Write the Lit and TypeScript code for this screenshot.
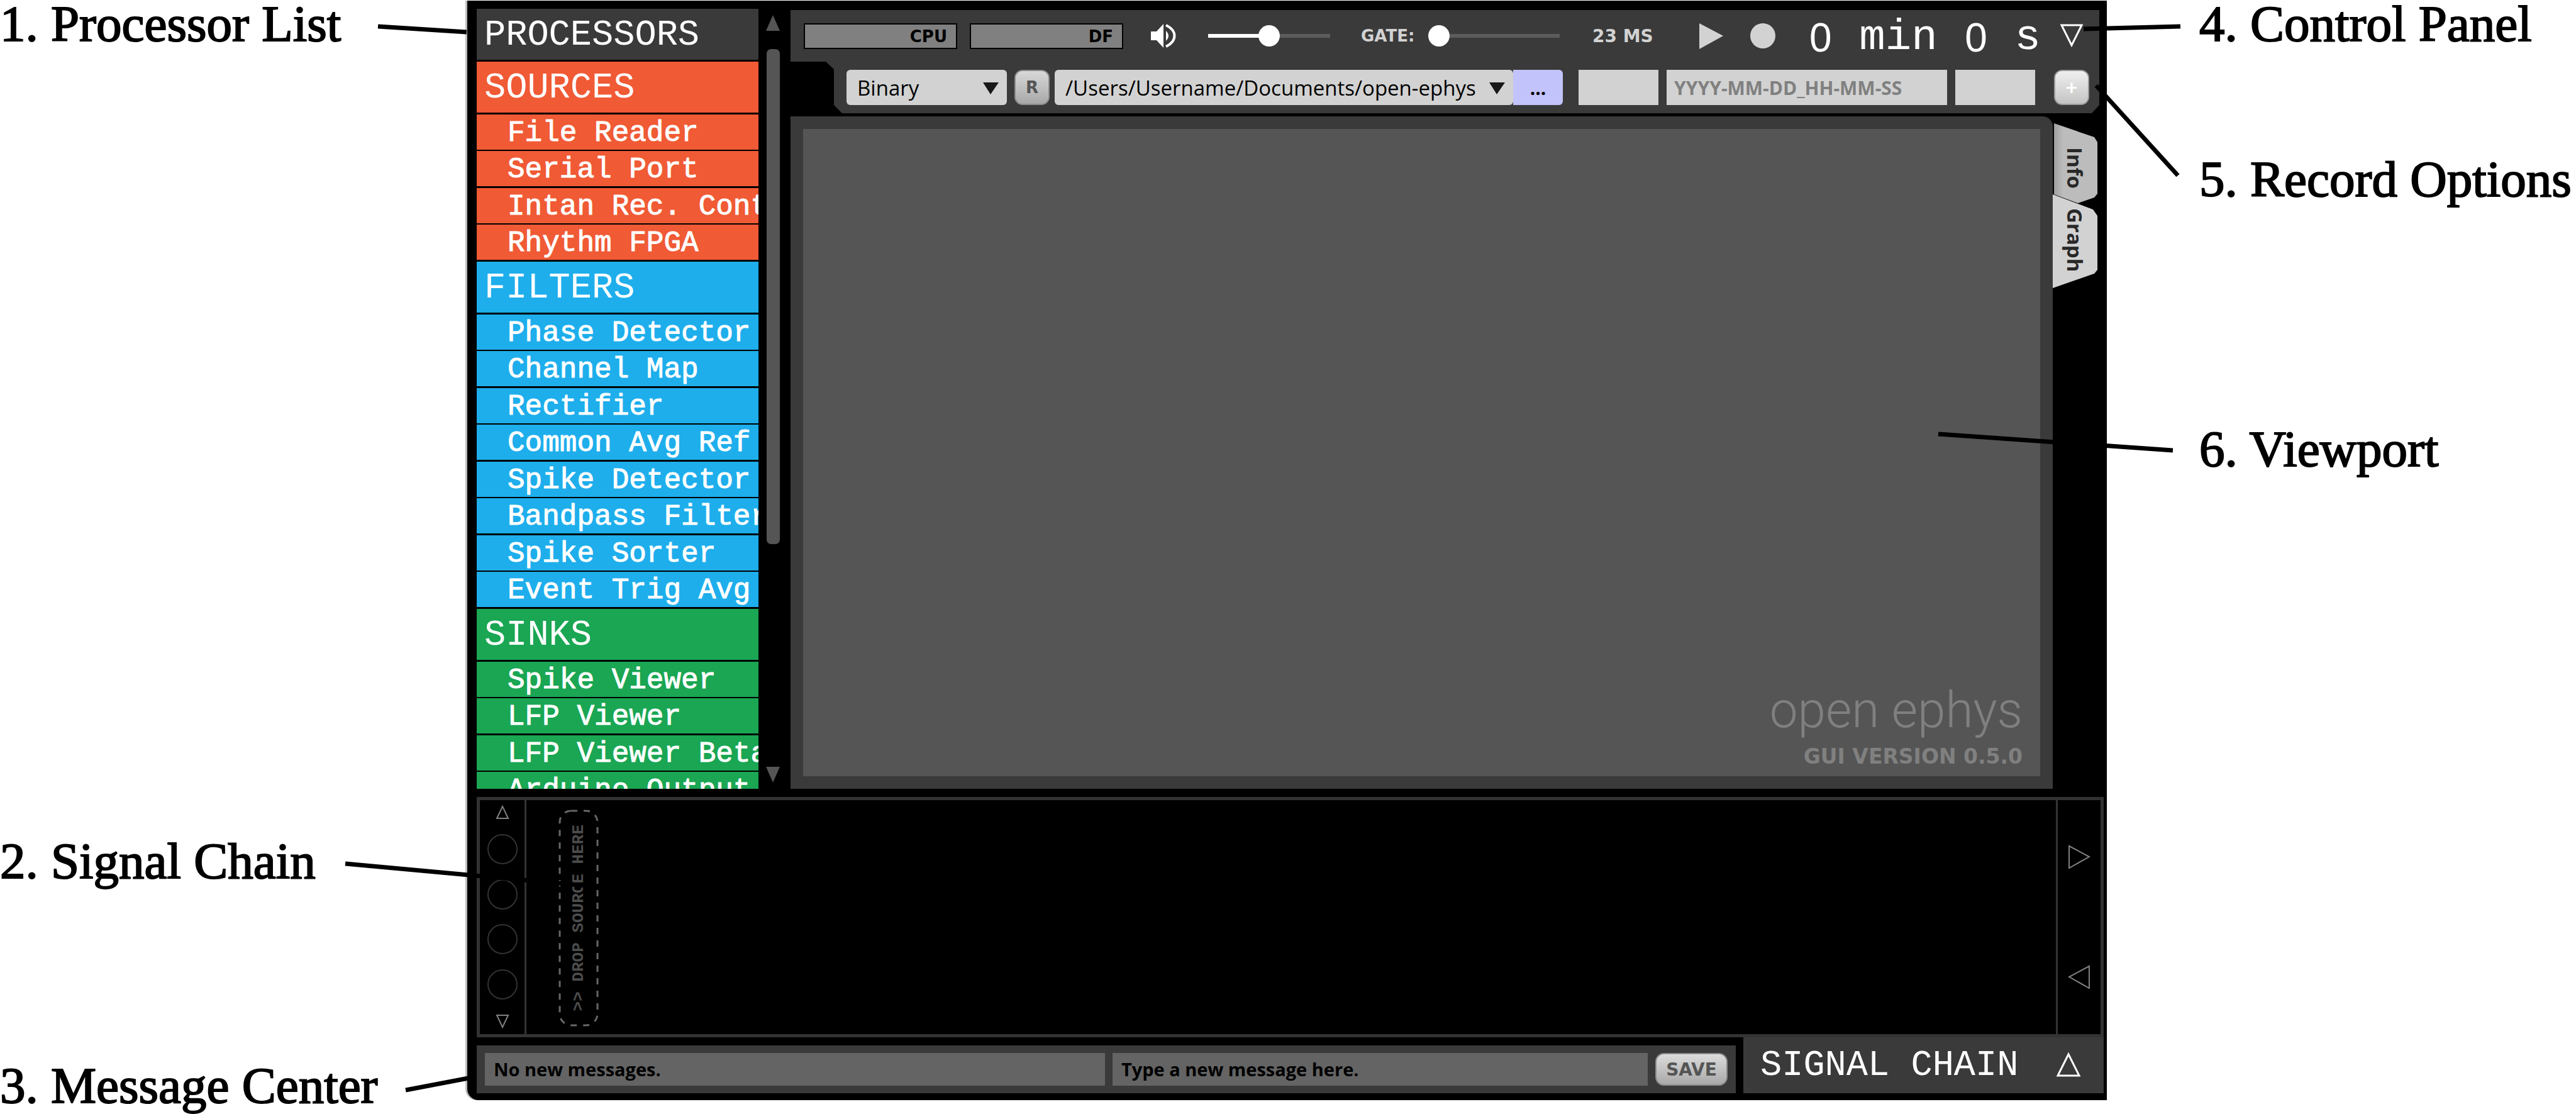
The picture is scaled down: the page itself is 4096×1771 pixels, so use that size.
import { LitElement, html, svg, css } from "lit";
import { customElement, state } from "lit/decorators.js";

interface Category {
  name: string;
  tone: string;
  items: string[];
}

const CATEGORIES: Category[] = [
  {
    name: "SOURCES",
    tone: "sources",
    items: ["File Reader", "Serial Port", "Intan Rec. Controller", "Rhythm FPGA"],
  },
  {
    name: "FILTERS",
    tone: "filters",
    items: [
      "Phase Detector",
      "Channel Map",
      "Rectifier",
      "Common Avg Ref",
      "Spike Detector",
      "Bandpass Filter",
      "Spike Sorter",
      "Event Trig Avg",
    ],
  },
  {
    name: "SINKS",
    tone: "sinks",
    items: ["Spike Viewer", "LFP Viewer", "LFP Viewer Beta", "Arduino Output"],
  },
];

@customElement("processor-list")
export class ProcessorList extends LitElement {
  static styles = css`
    :host {
      display: flex;
      min-height: 0;
      font-family: "Liberation Mono", monospace;
      color: #fff;
    }
    .list {
      width: 448px;
      overflow: hidden;
    }
    .head {
      margin: 0;
      height: 81px;
      padding-left: 12px;
      border-bottom: 3px solid #000;
      font-size: 57px;
      font-weight: 400;
      line-height: 84px;
      white-space: nowrap;
    }
    .items {
      margin: 0;
      padding: 0;
      list-style: none;
    }
    .item {
      height: 56px;
      padding-left: 49px;
      border-bottom: 2px solid #000;
      font-size: 46px;
      line-height: 60px;
      white-space: nowrap;
      overflow: hidden;
      -webkit-text-stroke: 1px #fff;
    }
    .item:nth-child(even) {
      border-bottom-width: 3px;
    }
    .title {
      background: #3a3a3a;
    }
    .sources .head,
    .sources .item {
      background: #f05a35;
    }
    .filters .head,
    .filters .item {
      background: #1eaeec;
    }
    .sinks .head,
    .sinks .item {
      background: #1aa653;
    }
    .scroll {
      width: 22px;
      margin: 0 17px 0 12px;
      padding: 10px 0;
      display: flex;
      flex-direction: column;
      align-items: center;
    }
    .arrow {
      display: block;
      fill: #555;
    }
    .track {
      flex: 1;
      width: 21px;
      padding-top: 29px;
    }
    .thumb {
      height: 69%;
      border-radius: 7px;
      background: #555;
    }
  `;

  render() {
    return html`
      <div class="list">
        <h1 class="head title">PROCESSORS</h1>
        ${CATEGORIES.map(
          (c) => html`
            <section class=${c.tone}>
              <h2 class="head">${c.name}</h2>
              <ul class="items">
                ${c.items.map((i) => html`<li class="item" draggable="true">${i}</li>`)}
              </ul>
            </section>
          `
        )}
      </div>
      <div class="scroll">
        <svg class="arrow" width="22" height="25"><path d="M11 0L22 25H0z" /></svg>
        <div class="track"><div class="thumb"></div></div>
        <svg class="arrow" width="22" height="25"><path d="M0 0H22L11 25z" /></svg>
      </div>
    `;
  }
}

/** Transport, audio and recording controls above the viewport. */
@customElement("control-panel")
export class ControlPanel extends LitElement {
  static styles = css`
    * {
      box-sizing: border-box;
    }
    :host {
      display: block;
    }
    button,
    select,
    input {
      margin: 0;
      padding: 0;
      border: 0;
      background: none;
      font: inherit;
      color: inherit;
    }
    .transport {
      display: flex;
      align-items: center;
      height: 82px;
      padding: 0 25px 0 21px;
      background: #3a3a3a;
      font: 700 26px "DejaVu Sans", sans-serif;
      color: #d2d2d2;
    }
    .meter {
      width: 244px;
      height: 41px;
      margin-right: 20px;
      padding-right: 14px;
      border: 2px solid #000;
      background: #808080;
      color: #000;
      line-height: 39px;
      text-align: right;
    }
    .speaker {
      margin: 0 50px 0 24px;
    }
    .slider {
      appearance: none;
      height: 34px;
    }
    .slider::-webkit-slider-runnable-track {
      height: 6px;
      background: #5c5c5c;
    }
    .slider::-webkit-slider-thumb {
      appearance: none;
      width: 34px;
      height: 34px;
      margin-top: -14px;
      border-radius: 50%;
      background: #fff;
    }
    .volume {
      width: 194px;
    }
    .volume::-webkit-slider-runnable-track {
      background: linear-gradient(90deg, #fff 50%, #5c5c5c 50%);
    }
    .gate {
      width: 209px;
    }
    .gate-label {
      width: 107px;
      margin-left: 49px;
    }
    .latency {
      margin-left: 52px;
      font-size: 28px;
    }
    .run {
      display: flex;
      align-items: center;
      margin-left: auto;
    }
    .icon {
      display: block;
      fill: #d2d2d2;
    }
    .record-dot {
      margin-left: 42px;
    }
    .clock {
      display: flex;
      gap: 41px;
      margin-left: 50px;
      padding-top: 6px;
      font: 400 69px/76px "Liberation Mono", monospace;
      color: #fff;
    }
    .digit {
      width: 41px;
      font-family: "Liberation Sans", sans-serif;
      font-size: 64px;
      text-align: center;
    }
    .toggle {
      margin-left: 30px;
    }
    .options {
      display: flex;
      height: 82px;
      margin-left: 56px;
      padding: 13px 16px 13px 33px;
      background: #3a3a3a;
      clip-path: polygon(
        0 0,
        100% 0,
        100% 69px,
        calc(100% - 12px) 100%,
        26px 100%,
        13px 69px,
        13px 12px
      );
      font: 500 33px "Open Sans", sans-serif;
      color: #000;
    }
    .pick {
      position: relative;
      display: flex;
    }
    .pick .select {
      appearance: none;
      width: 100%;
      padding-left: 17px;
      border-radius: 6px;
      background: #d2d2d2;
    }
    .pick .caret {
      position: absolute;
      right: 13px;
      top: 20px;
      fill: #181818;
      pointer-events: none;
    }
    .format {
      width: 255px;
    }
    .path {
      flex: 1;
    }
    .key {
      width: 56px;
      border: 2px solid #8c8c8c;
      border-radius: 13px;
      background: linear-gradient(#d8d8d8, #a8a8a8);
      color: #555;
      font: 700 26px "DejaVu Sans", sans-serif;
      text-align: center;
    }
    .rename {
      margin: 0 8px 0 12px;
    }
    .browse {
      width: 79px;
      border-radius: 0 6px 6px 0;
      background: #c3c3fb;
      font-size: 30px;
      font-weight: 700;
    }
    .field {
      width: 127px;
      background: #d2d2d2;
      color: #808080;
      font-size: 30px;
      font-weight: 700;
    }
    .prefix {
      margin-left: 25px;
    }
    .date {
      width: 446px;
      margin: 0 13px;
      padding-left: 12px;
    }
    .date::placeholder {
      color: #808080;
      opacity: 1;
    }
    .add {
      margin-left: 30px;
      border-color: #9a9a9a;
      background: linear-gradient(#efefef, #c4c4c4);
      color: #fff;
    }
  `;

  render() {
    const caret = svg`<path d="M0 0H25L12 19z" />`;
    return html`
      <div class="transport">
        <div class="meter">CPU</div>
        <div class="meter">DF</div>
        <svg class="speaker" width="41" height="40" viewBox="0 0 41 40">
          <path fill="#fff" d="M0 13H9L20 1V39L9 27H0z" />
          <path fill="#fff" d="M24 12Q28 16 28 20T24 28z" />
          <path
            fill="none"
            stroke="#fff"
            stroke-width="4"
            d="M24 3C42 12 42 28 24 37"
          />
        </svg>
        <input class="slider volume" type="range" value="50" aria-label="Volume" />
        <label class="gate-label" for="gate">GATE:</label>
        <input class="slider gate" id="gate" type="range" value="0" />
        <span class="latency">23 MS</span>
        <div class="run">
          <button aria-label="Play">
            <svg class="icon" width="38" height="41"><path d="M0 0L38 20L0 41z" /></svg>
          </button>
          <button class="record-dot" aria-label="Record">
            <svg class="icon" width="42" height="41"><circle cx="21" cy="20" r="20" /></svg>
          </button>
          <div class="clock">
            <span class="digit">0</span><span>min</span><span class="digit">0</span
            ><span>s</span>
          </div>
          <button class="toggle" aria-label="Hide record options">
            <svg class="icon" width="38" height="40">
              <path d="M3 3H35L19 35z" fill="none" stroke="#fff" stroke-width="3" />
            </svg>
          </button>
        </div>
      </div>
      <div class="options">
        <div class="pick format">
          <select class="select" aria-label="Record format">
            <option>Binary</option>
          </select>
          <svg class="caret" width="25" height="19">${caret}</svg>
        </div>
        <button class="key rename">R</button>
        <div class="pick path">
          <select class="select" aria-label="Data directory">
            <option>/Users/Username/Documents/open-ephys</option>
          </select>
          <svg class="caret" width="25" height="19">${caret}</svg>
        </div>
        <button class="browse">...</button>
        <input class="field prefix" aria-label="Prefix" />
        <input class="field date" aria-label="Base name" placeholder="YYYY-MM-DD_HH-MM-SS" />
        <input class="field" aria-label="Suffix" />
        <button class="key add">+</button>
      </div>
    `;
  }
}

/** Canvas area with its vertical tabs. */
@customElement("data-viewport")
export class DataViewport extends LitElement {
  static styles = css`
    :host {
      display: flex;
      min-height: 0;
    }
    .frame {
      flex: 1;
      display: flex;
      padding: 20px;
      border-radius: 0 16px 0 0;
      background: #3a3a3a;
    }
    .canvas {
      flex: 1;
      display: flex;
      flex-direction: column;
      justify-content: flex-end;
      align-items: flex-end;
      gap: 6px;
      padding: 0 28px 12px;
      background: #555;
      color: #808080;
    }
    .brand {
      font: 300 80px/98px "Roboto", sans-serif;
    }
    .version {
      font: 700 33px/38px "DejaVu Sans", sans-serif;
    }
    .tabs {
      display: flex;
      flex-direction: column;
      width: 71px;
      padding-top: 11px;
    }
    .tab {
      display: flex;
      align-items: center;
      justify-content: center;
      padding: 0;
      border: 0;
      writing-mode: vertical-rl;
      font: 700 33px "Open Sans", sans-serif;
      color: #282828;
    }
    .info {
      height: 127px;
      padding-top: 14px;
      background: linear-gradient(90deg, #999, #bcbcbc 16px);
      clip-path: polygon(2px 0, 66px 22px, 71px 30px, 71px 112px, 66px 118px, 40px 100%, 2px 113px);
    }
    .graph {
      height: 149px;
      margin-top: -14px;
      padding-bottom: 4px;
      background: #d2d2d2;
      clip-path: polygon(0 0, 64px 24px, 71px 34px, 71px 120px, 66px 126px, 0 100%);
    }
  `;

  render() {
    return html`
      <div class="frame">
        <div class="canvas">
          <div class="brand">open ephys</div>
          <div class="version">GUI VERSION 0.5.0</div>
        </div>
      </div>
      <div class="tabs" role="tablist">
        <button class="tab info" role="tab">Info</button>
        <button class="tab graph" role="tab">Graph</button>
      </div>
    `;
  }
}

/** Editor strip into which processors are dropped. */
@customElement("signal-chain")
export class SignalChain extends LitElement {
  static styles = css`
    :host {
      display: flex;
      box-sizing: border-box;
      height: 382px;
      border: 5px solid #333;
    }
    .banks,
    .shift {
      display: flex;
      flex-direction: column;
      align-items: center;
      justify-content: space-between;
      box-sizing: border-box;
    }
    .banks {
      width: 74px;
      padding: 7px 0 8px;
      border-right: 3px solid #333;
    }
    .btn {
      display: block;
      padding: 0;
      border: 0;
      background: none;
    }
    .ring {
      box-sizing: border-box;
      width: 48px;
      height: 48px;
      border: 2px solid #333;
      border-radius: 50%;
    }
    .glyph {
      display: block;
      fill: none;
      stroke: #808080;
      stroke-width: 2;
    }
    .area {
      flex: 1;
      padding: 15px 0 12px 51px;
      display: flex;
    }
    .drop {
      position: relative;
      display: flex;
      align-items: center;
      justify-content: center;
      width: 64px;
      writing-mode: vertical-rl;
      font: 700 26px "Liberation Mono", monospace;
      color: #4c4c4c;
    }
    .outline {
      position: absolute;
      inset: 0;
      width: 100%;
      height: 100%;
    }
    .turned {
      transform: rotate(180deg);
    }
    .shift {
      width: 71px;
      border-left: 3px solid #333;
      padding: 71px 0 72px;
    }
  `;

  render() {
    return html`
      <div class="banks">
        <button class="btn" aria-label="Previous chain">
          <svg class="glyph" width="22" height="24"><path d="M11 3L20 22H2z" /></svg>
        </button>
        ${[1, 2, 3, 4].map((n) => html`<button class="btn ring" aria-label="Chain ${n}"></button>`)}
        <button class="btn" aria-label="Next chain">
          <svg class="glyph" width="22" height="24"><path d="M11 21L20 2H2z" /></svg>
        </button>
      </div>
      <div class="area">
        <div class="drop">
          <svg class="outline">
            <rect
              x="2"
              y="2"
              width="60"
              height="341"
              rx="18"
              fill="none"
              stroke="#666"
              stroke-width="3"
              stroke-dasharray="10 10"
            />
          </svg>
          <span class="turned">&gt;&gt; DROP SOURCE HERE</span>
        </div>
      </div>
      <div class="shift">
        <button class="btn" aria-label="Scroll right">
          <svg class="glyph" width="36" height="38"><path d="M2 2L34 19L2 37z" /></svg>
        </button>
        <button class="btn" aria-label="Scroll left">
          <svg class="glyph" width="36" height="38"><path d="M34 2L2 19L34 37z" /></svg>
        </button>
      </div>
    `;
  }
}

/** Message bar and the tab that folds the signal chain. */
@customElement("message-center")
export class MessageCenter extends LitElement {
  static styles = css`
    * {
      box-sizing: border-box;
    }
    :host {
      display: flex;
      height: 89px;
      font: 700 29px "Open Sans", sans-serif;
    }
    .bar {
      flex: 1;
      display: flex;
      gap: 12px;
      margin: 13px 12px 0 0;
      padding: 12px 13px;
      background: #3a3a3a;
    }
    .message {
      flex: 988;
      min-width: 0;
      padding: 0 14px;
      border: 0;
      background: #646464;
      font: inherit;
      line-height: 52px;
      color: #000;
    }
    .entry {
      flex: 849;
    }
    .save {
      width: 115px;
      padding: 0;
      border: 2px solid #8c8c8c;
      border-radius: 14px;
      background: linear-gradient(#dcdcdc, #a8a8a8);
      font: 700 28px "DejaVu Sans", sans-serif;
      color: #555;
    }
    .fold {
      display: flex;
      align-items: center;
      justify-content: space-between;
      width: 573px;
      padding: 0 36px 0 27px;
      border: 0;
      background: #3a3a3a;
      font: 400 57px "Liberation Mono", monospace;
      color: #fff;
    }
  `;

  render() {
    return html`
      <div class="bar">
        <output class="message">No new messages.</output>
        <input class="message entry" aria-label="New message" value="Type a new message here." />
        <button class="save">SAVE</button>
      </div>
      <button class="fold">
        SIGNAL CHAIN
        <svg width="40" height="42">
          <path d="M20 3L37 37H3z" fill="none" stroke="#fff" stroke-width="3" />
        </svg>
      </button>
    `;
  }
}

const POINTERS = [
  [601, 42, 742, 51],
  [549, 1373, 964, 1411],
  [645, 1733, 750, 1713],
  [3313, 46, 3467, 42],
  [3333, 136, 3463, 279],
  [3082, 690, 3455, 716],
];

@customElement("app-root")
export class AppRoot extends LitElement {
  @state() private left = ["1. Processor List", "2. Signal Chain", "3. Message Center"];
  @state() private right = ["4. Control Panel", "5. Record Options", "6. Viewport"];

  static styles = css`
    :host {
      display: block;
      background: #fff;
    }
    .stage {
      position: relative;
      display: grid;
      grid-template-columns: 743px minmax(0, 1fr) 746px;
      height: 100vh;
      overflow: hidden;
    }
    .notes {
      display: grid;
      font: 400 81px/77px "Liberation Serif", serif;
      color: #000;
      white-space: nowrap;
      -webkit-text-stroke: 2px #000;
    }
    .notes-left {
      grid-template-rows: 1331fr 357fr 83fr;
    }
    .notes-right {
      grid-template-rows: 247fr 429fr 1095fr;
      padding-left: 147px;
    }
    .window {
      display: flex;
      flex-direction: column;
      gap: 13px;
      box-sizing: border-box;
      margin: 1px 0 22px;
      padding: 13px 5px 11px 15px;
      min-height: 0;
      border-radius: 0 0 0 18px;
      background: #000;
      box-shadow: -3px 0 0 #bbb;
    }
    .workspace {
      flex: 1;
      display: flex;
      min-height: 0;
    }
    .main {
      flex: 1;
      display: flex;
      flex-direction: column;
      gap: 5px;
      min-width: 0;
      padding-top: 2px;
    }
    .controls {
      margin-right: 7px;
    }
    .viewport {
      flex: 1;
      margin-right: 10px;
    }
    .pointers {
      position: absolute;
      inset: 0;
      width: 100%;
      height: 100%;
      stroke: #000;
      stroke-width: 7;
      pointer-events: none;
    }
  `;

  render() {
    return html`
      <div class="stage">
        <div class="notes notes-left">${this.left.map((t) => html`<div>${t}</div>`)}</div>
        <div class="window">
          <div class="workspace">
            <processor-list></processor-list>
            <div class="main">
              <control-panel class="controls"></control-panel>
              <data-viewport class="viewport"></data-viewport>
            </div>
          </div>
          <div>
            <signal-chain></signal-chain>
            <message-center></message-center>
          </div>
        </div>
        <div class="notes notes-right">${this.right.map((t) => html`<div>${t}</div>`)}</div>
        <svg class="pointers" viewBox="0 0 4096 1771" preserveAspectRatio="none">
          ${POINTERS.map(
            ([x1, y1, x2, y2]) => svg`<line x1=${x1} y1=${y1} x2=${x2} y2=${y2} />`
          )}
        </svg>
      </div>
    `;
  }
}
